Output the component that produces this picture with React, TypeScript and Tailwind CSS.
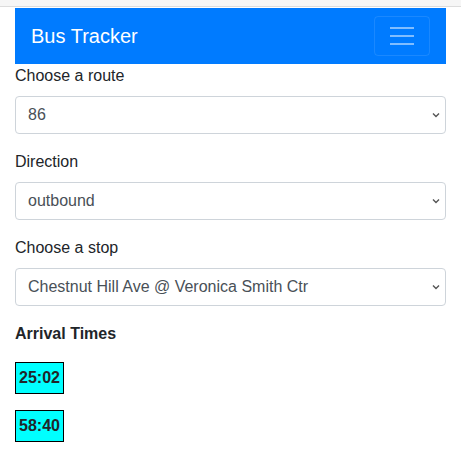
import { useState } from 'react';

const routes = ['86'];
const directions = ['outbound', 'inbound'];
const stops = ['Chestnut Hill Ave @ Veronica Smith Ctr'];
const arrivals = ['25:02', '58:40'];

function Chevron() {
  return (
    <svg className="pointer-events-none absolute right-[5px] top-1/2 -translate-y-1/2" width="10" height="10" viewBox="0 0 10 10">
      <path d="M2 3.5 L5 6.5 L8 3.5" fill="none" stroke="#555" strokeWidth="1.4" />
    </svg>
  );
}

function Field({ label, value, options, onChange }: { label: string; value: string; options: string[]; onChange: (v: string) => void }) {
  return (
    <div className="mb-4">
      <label className="block mb-2 leading-6 text-base">{label}</label>
      <div className="relative">
        <select
          value={value}
          onChange={(e) => onChange(e.target.value)}
          className="block w-full h-[38px] appearance-none rounded border border-[#ced4da] bg-white pl-3 pr-6 text-base text-[#495057] outline-none"
        >
          {options.map((o) => (
            <option key={o} value={o}>{o}</option>
          ))}
        </select>
        <Chevron />
      </div>
    </div>
  );
}

export default function App() {
  const [route, setRoute] = useState('86');
  const [direction, setDirection] = useState('outbound');
  const [stop, setStop] = useState(stops[0]);

  return (
    <div className="min-h-screen bg-white text-[#212529] font-['Liberation_Sans',Arial,sans-serif]">
      {/* browser strip remnant */}
      <div className="h-[7px] bg-[#f6f6f6] border-b border-[#dcdcdc]" />
      <div className="px-[15px] pt-px">
        {/* NAVBAR */}
        <nav className="h-14 bg-[#007bff] flex items-center justify-between pl-4 pr-4">
          <span className="text-white text-xl leading-[30px]">Bus Tracker</span>
          <button className="w-14 h-10 rounded border border-white/10 flex flex-col items-center justify-center gap-[6px]">
            <span className="block w-6 h-[2px] bg-white/50" />
            <span className="block w-6 h-[2px] bg-white/50" />
            <span className="block w-6 h-[2px] bg-white/50" />
          </button>
        </nav>

        <Field label="Choose a route" value={route} options={routes} onChange={setRoute} />
        <Field label="Direction" value={direction} options={directions} onChange={setDirection} />
        <Field label="Choose a stop" value={stop} options={stops} onChange={setStop} />

        {/* ARRIVALS */}
        <h6 className="font-bold text-base leading-6 mb-4">Arrival Times</h6>
        <div className="flex flex-col items-start gap-4">
          {arrivals.map((a) => (
            <div key={a} className="h-8 px-[3px] border border-black bg-[#00ffff] font-bold text-base leading-[30px]">
              {a}
            </div>
          ))}
        </div>
      </div>
    </div>
  );
}
